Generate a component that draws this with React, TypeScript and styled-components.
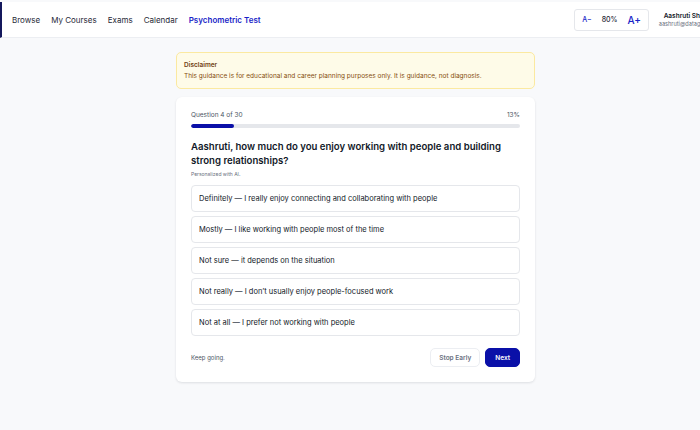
import React, { useState } from "react";
import styled, { createGlobalStyle } from "styled-components";

const GlobalStyle = createGlobalStyle`
  html, body {
    margin: 0;
    padding: 0;
    background: #f8f9fb;
    font-family: Inter, "Liberation Sans", sans-serif;
    color: #111827;
  }
`;

const Page = styled.div`
  width: 700px;
  height: 430px;
  overflow: hidden;
  padding-top: 2px;
  box-sizing: border-box;
`;

const Header = styled.header`
  height: 35px;
  background: #fff;
  border-left: 2px solid #14185c;
  border-bottom: 1px solid #eceef2;
  display: flex;
  align-items: center;
  justify-content: space-between;
  padding-left: 10px;
`;

const Nav = styled.nav`
  display: flex;
  gap: 11px;
`;

const NavLink = styled.a<{ $active?: boolean }>`
  font-size: 8px;
  font-weight: ${(p) => (p.$active ? 600 : 400)};
  color: ${(p) => (p.$active ? "#1a1fc8" : "#1f2937")};
  text-decoration: none;
  cursor: pointer;
`;

const Right = styled.div`
  display: flex;
  align-items: center;
  gap: 7px;
  margin-right: -16px;
`;

const ScaleBox = styled.div`
  display: flex;
  align-items: center;
  gap: 10px;
  height: 20px;
  padding: 0 7px;
  border: 1px solid #e5e7eb;
  border-radius: 3px;
  background: #fff;
`;

const ScaleBtn = styled.button<{ $big?: boolean }>`
  border: none;
  background: none;
  padding: 0;
  font-family: inherit;
  color: #1a1fc8;
  font-size: ${(p) => (p.$big ? "10px" : "7px")};
  font-weight: 500;
  cursor: pointer;
`;

const ScaleValue = styled.span`
  font-size: 7px;
  font-weight: 500;
  color: #1f2937;
`;

const User = styled.div`
  width: 60px;
  display: flex;
  flex-direction: column;
  align-items: flex-end;
  white-space: nowrap;
`;

const UserName = styled.div`
  font-size: 6.5px;
  font-weight: 600;
  color: #111827;
`;

const UserMail = styled.div`
  font-size: 5.6px;
  color: #6b7280;
  margin-top: 1px;
`;

const Main = styled.main`
  width: 359px;
  margin: 14px 0 0 176px;
  display: flex;
  flex-direction: column;
  gap: 8px;
`;

const Disclaimer = styled.div`
  background: #fefbe8;
  border: 1px solid #fbe9a0;
  border-radius: 5px;
  padding: 8px 7px 8px;
`;

const DisclaimerTitle = styled.div`
  font-size: 6.5px;
  font-weight: 600;
  color: #713f12;
  margin-bottom: 3px;
`;

const DisclaimerText = styled.div`
  font-size: 6.5px;
  color: #854d0e;
`;

const Card = styled.div`
  background: #fff;
  border-radius: 6px;
  box-shadow: 0 1px 3px rgba(15, 23, 42, 0.08), 0 1px 2px rgba(15, 23, 42, 0.04);
  padding: 14px 15px 15px;
`;

const ProgressHead = styled.div`
  display: flex;
  justify-content: space-between;
  font-size: 6.5px;
  color: #4b5563;
`;

const Track = styled.div`
  margin-top: 5px;
  height: 4px;
  border-radius: 2px;
  background: #e5e7eb;
  overflow: hidden;
`;

const Fill = styled.div`
  height: 100%;
  background: #0a10a8;
  border-radius: 2px;
`;

const Question = styled.h2`
  margin: 12px 0 0;
  font-size: 9.6px;
  line-height: 14px;
  font-weight: 600;
  color: #111827;
`;

const Hint = styled.div`
  margin-top: 3px;
  font-size: 5px;
  color: #6b7280;
`;

const Options = styled.div`
  margin-top: 8px;
  display: flex;
  flex-direction: column;
  gap: 4px;
`;

const Option = styled.button<{ $selected?: boolean }>`
  height: 27px;
  box-sizing: border-box;
  text-align: left;
  padding: 0 7px;
  font-family: inherit;
  font-size: 7.5px;
  color: #111827;
  background: #fff;
  border: 1px solid ${(p) => (p.$selected ? "#0a10a8" : "#e5e7eb")};
  border-radius: 4px;
  cursor: pointer;
`;

const Footer = styled.div`
  margin-top: 12px;
  display: flex;
  align-items: center;
  justify-content: space-between;
`;

const FooterNote = styled.span`
  font-size: 6px;
  color: #4b5563;
`;

const Buttons = styled.div`
  display: flex;
  gap: 5px;
`;

const Btn = styled.button<{ $primary?: boolean }>`
  height: 19px;
  padding: 0 ${(p) => (p.$primary ? "9px" : "8px")};
  border-radius: 5px;
  font-family: inherit;
  font-size: 6.5px;
  font-weight: 600;
  cursor: pointer;
  border: 1px solid ${(p) => (p.$primary ? "#0a10a8" : "#eceef2")};
  background: ${(p) => (p.$primary ? "#0a10a8" : "#fff")};
  color: ${(p) => (p.$primary ? "#fff" : "#6b7280")};
`;

const options = [
  "Definitely — I really enjoy connecting and collaborating with people",
  "Mostly — I like working with people most of the time",
  "Not sure — it depends on the situation",
  "Not really — I don’t usually enjoy people-focused work",
  "Not at all — I prefer not working with people",
];

export default function App() {
  const [selected, setSelected] = useState<number | null>(null);
  const current = 4;
  const total = 30;
  const pct = Math.round((current / total) * 100);

  return (
    <Page>
      <GlobalStyle />
      <Header>
        <Nav>
          <NavLink>Browse</NavLink>
          <NavLink>My Courses</NavLink>
          <NavLink>Exams</NavLink>
          <NavLink>Calendar</NavLink>
          <NavLink $active>Psychometric Test</NavLink>
        </Nav>
        <Right>
          <ScaleBox>
            <ScaleBtn>A−</ScaleBtn>
            <ScaleValue>80%</ScaleValue>
            <ScaleBtn $big>A+</ScaleBtn>
          </ScaleBox>
          <User>
            <UserName>Aashruti Sharma</UserName>
            <UserMail>aashruti@datagami.in</UserMail>
          </User>
        </Right>
      </Header>
      <Main>
        <Disclaimer>
          <DisclaimerTitle>Disclaimer</DisclaimerTitle>
          <DisclaimerText>
            This guidance is for educational and career planning purposes only. It is guidance, not diagnosis.
          </DisclaimerText>
        </Disclaimer>
        <Card>
          <ProgressHead>
            <span>
              Question {current} of {total}
            </span>
            <span>{pct}%</span>
          </ProgressHead>
          <Track>
            <Fill style={{ width: `${pct}%` }} />
          </Track>
          <Question>
            Aashruti, how much do you enjoy working with people and building strong relationships?
          </Question>
          <Hint>Personalized with AI.</Hint>
          <Options>
            {options.map((o, i) => (
              <Option key={i} $selected={selected === i} onClick={() => setSelected(i)}>
                {o}
              </Option>
            ))}
          </Options>
          <Footer>
            <FooterNote>Keep going.</FooterNote>
            <Buttons>
              <Btn>Stop Early</Btn>
              <Btn $primary>Next</Btn>
            </Buttons>
          </Footer>
        </Card>
      </Main>
    </Page>
  );
}
